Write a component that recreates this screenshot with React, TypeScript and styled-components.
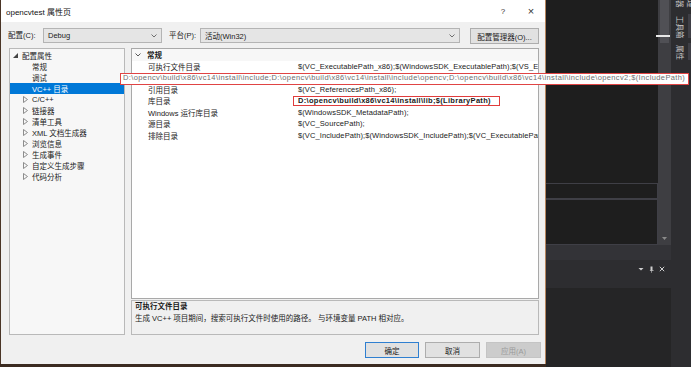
import styled, { createGlobalStyle } from "styled-components";

const FONT = `"Liberation Sans", "Noto Sans CJK SC", sans-serif`;

const GlobalStyle = createGlobalStyle`
  html, body {
    margin: 0;
    padding: 0;
    background: #1e1e1e;
  }
  body {
    font-family: ${FONT};
  }
`;

const Screen = styled.div`
	position: relative;
	width: 691px;
	height: 367px;
	display: flex;
	align-items: flex-start;
	background: #3b2b21;
	overflow: hidden;
	font-family: ${FONT};
	font-size: 7.5px;
	color: #1a1a1a;
`;

/* ---------- dialog ---------- */

const Dialog = styled.div`
	width: 546px;
	height: 364px;
	box-sizing: border-box;
	flex-shrink: 0;
	display: flex;
	flex-direction: column;
	background: #f0f0f0;
	border-left: 1px solid #4a3526;
	border-right: 1px solid #b5845d;
`;

const TitleBar = styled.div`
	height: 22px;
	display: flex;
	align-items: center;
	background: #ffffff;
	padding-left: 5px;
`;

const TitleText = styled.span`
	flex: 1;
	font-size: 8px;
	color: #111;
`;

const TitleButton = styled.span`
	width: 28px;
	text-align: center;
	font-size: ${(p) => (p.big ? "11px" : "8px")};
	color: #333;
`;

const ConfigRow = styled.div`
	height: 26px;
	box-sizing: border-box;
	display: flex;
	align-items: flex-start;
	padding: 6px 0 0 7px;
`;

const FieldLabel = styled.span`
	width: ${(p) => p.w}px;
	margin-left: ${(p) => p.ml || 0}px;
	line-height: 15px;
`;

const Combo = styled.div`
	width: ${(p) => p.w}px;
	height: 15px;
	box-sizing: border-box;
	display: flex;
	align-items: center;
	justify-content: space-between;
	padding: 0 4px 0 4px;
	background: #e5e5e5;
	border: 1px solid #b4b4b4;
`;

const PushButton = styled.div`
	width: ${(p) => p.w}px;
	height: 16px;
	box-sizing: border-box;
	margin-left: ${(p) => p.ml || 0}px;
	display: flex;
	align-items: center;
	justify-content: center;
	background: ${(p) => (p.disabled ? "#cccccc" : "#e1e1e1")};
	border: 1px solid ${(p) => (p.primary ? "#2f7fd0" : p.disabled ? "#c4c4c4" : "#adadad")};
	color: ${(p) => (p.disabled ? "#9a9a9a" : "#1a1a1a")};
`;

const Main = styled.div`
	height: 287px;
	display: flex;
	padding-left: 8px;
`;

const Tree = styled.div`
	width: 116px;
	box-sizing: border-box;
	background: #f7f7f7;
	border: 1px solid #b9b9b9;
	padding-top: 1px;
`;

const TreeRow = styled.div`
	height: 11px;
	display: flex;
	align-items: center;
	padding-left: ${(p) => (p.level ? 13 : 3)}px;
	background: ${(p) => (p.selected ? "#0078d7" : "transparent")};
	color: ${(p) => (p.selected ? "#ffffff" : "#1a1a1a")};
`;

const Expander = styled.span`
	width: 9px;
	height: 11px;
	display: flex;
	align-items: center;
`;

const RightPane = styled.div`
	width: 408px;
	margin-left: 6px;
	display: flex;
	flex-direction: column;
	gap: 1px;
`;

const Grid = styled.div`
	height: 251px;
	box-sizing: border-box;
	background: #ffffff;
	border: 1px solid #a9a9a9;
	overflow: hidden;
`;

const GridRow = styled.div`
	height: 11.5px;
	display: grid;
	grid-template-columns: 12px 149px 1fr;
	align-items: center;
	background: ${(p) => (p.header ? "#f7f7f7" : "transparent")};
	visibility: ${(p) => (p.covered ? "hidden" : "visible")};
`;

const Gutter = styled.span`
	display: flex;
	justify-content: center;
	align-items: center;
`;

const NameCell = styled.span`
	padding-left: ${(p) => (p.header ? 3 : 4)}px;
	font-weight: ${(p) => (p.header ? 700 : 400)};
	white-space: nowrap;
`;

const ValueCell = styled.span`
	padding-left: 5px;
	white-space: nowrap;
	overflow: hidden;
	letter-spacing: 0.1px;
`;

const Highlight = styled.span`
	display: inline-block;
	margin-left: -5px;
	padding: 0 8px 0 4px;
	line-height: 8.5px;
	font-weight: 700;
	letter-spacing: 0.3px;
	border: 1.5px solid #e03c3c;
`;

const Description = styled.div`
	height: 35px;
	box-sizing: border-box;
	background: #f0f0f0;
	border: 1px solid #b9b9b9;
	padding-left: 3px;
	line-height: 12px;
`;

const DescTitle = styled.div`
	font-weight: 700;
`;

const Footer = styled.div`
	display: flex;
	justify-content: flex-end;
	gap: 6px;
	padding: 7px 4px 0 0;
`;

/* ---------- callout over the grid ---------- */

const Callout = styled.div`
	position: absolute;
	left: 120px;
	top: 73px;
	width: 569px;
	height: 11.5px;
	box-sizing: border-box;
	background: #ffffff;
	border: 1.5px solid #e04444;
	padding-left: 2px;
	line-height: 8.5px;
	font-size: 7.5px;
	letter-spacing: 0.38px;
	color: #6f6f6f;
	white-space: nowrap;
	overflow: hidden;
`;

/* ---------- IDE behind the dialog ---------- */

const Ide = styled.div`
	flex: 1;
	height: 367px;
	display: flex;
	background: #2d2d30;
`;

const IdeMain = styled.div`
	width: 125px;
	display: flex;
	flex-direction: column;
`;

const TopArea = styled.div`
	height: 245px;
	display: flex;
`;

const EditorStack = styled.div`
	flex: 1;
	display: flex;
	flex-direction: column;
	background: #1e1e1e;
`;

const Editor = styled.div`
	height: 183px;
	background: #1e1e1e;
`;

const OutputBox = styled.div`
	height: ${(p) => (p.grow ? "auto" : "16px")};
	flex: ${(p) => (p.grow ? 1 : "none")};
	box-sizing: border-box;
	background: #1e1e1e;
	border: 1px solid #3f3f46;
	border-left: none;
`;

const ScrollTrack = styled.div`
	width: 13px;
	position: relative;
	display: flex;
	flex-direction: column;
	align-items: center;
	background: #3e3e42;
`;

const ScrollThumb = styled.div`
	width: 9px;
	height: 43px;
	background: #505055;
`;

const Marker = styled.div`
	position: absolute;
	left: -2px;
	top: 35px;
	width: 14px;
	height: 1.5px;
	background: #e8e8e8;
`;

const ScrollArrow = styled.div`
	margin-top: auto;
	margin-bottom: 3px;
`;

const Band = styled.div`
	height: 15px;
	background: #333337;
`;

const PanelHeader = styled.div`
	height: 28px;
	display: flex;
	align-items: flex-start;
	justify-content: flex-end;
	gap: 5px;
	padding: 6px 6px 0 0;
	box-sizing: border-box;
	background: #2d2d30;
`;

const PanelBody = styled.div`
	flex: 1;
	background: #252526;
`;

const SideTabs = styled.div`
	flex: 1;
	display: flex;
	flex-direction: column;
	align-items: flex-start;
	gap: 5px;
	padding-left: 4px;
	background: #2d2d30;
`;

const SideTab = styled.div`
	height: ${(p) => p.h}px;
	display: flex;
	justify-content: flex-end;
	align-items: flex-end;
	flex-direction: column;
	overflow: hidden;
	writing-mode: vertical-rl;
	text-orientation: sideways;
	font-size: 7.5px;
	color: #c8c8c8;
	border-right: 4px solid #3f3f46;
	padding-right: 2px;
`;

const Caret = ({ open }: { open?: boolean }) =>
	open ? (
		<svg width="5" height="5" viewBox="0 0 5 5">
			<polygon points="5,0 5,5 0,5" fill="#444" />
		</svg>
	) : (
		<svg width="5" height="7" viewBox="0 0 5 7">
			<polygon points="0.5,0.5 4.5,3.5 0.5,6.5" fill="none" stroke="#808080" strokeWidth="0.9" />
		</svg>
	);

const Chevron = ({ color = "#606060" }: { color?: string }) => (
	<svg width="6" height="4" viewBox="0 0 6 4">
		<polyline points="0.5,0.5 3,3 5.5,0.5" fill="none" stroke={color} strokeWidth="0.9" />
	</svg>
);

const treeItems = [
	{ label: "常规" },
	{ label: "调试" },
	{ label: "VC++ 目录", selected: true },
	{ label: "C/C++", closed: true },
	{ label: "链接器", closed: true },
	{ label: "清单工具", closed: true },
	{ label: "XML 文档生成器", closed: true },
	{ label: "浏览信息", closed: true },
	{ label: "生成事件", closed: true },
	{ label: "自定义生成步骤", closed: true },
	{ label: "代码分析", closed: true },
];

const includePath =
	"D:\\opencv\\build\\x86\\vc14\\install\\include;D:\\opencv\\build\\x86\\vc14\\install\\include\\opencv;D:\\opencv\\build\\x86\\vc14\\install\\include\\opencv2;$(IncludePath)";

const props = [
	{ name: "可执行文件目录", value: "$(VC_ExecutablePath_x86);$(WindowsSDK_ExecutablePath);$(VS_ExecutablePath);$(MSBuild_ExecutablePath)" },
	{ name: "包含目录", value: includePath, covered: true },
	{ name: "引用目录", value: "$(VC_ReferencesPath_x86);" },
	{ name: "库目录", value: "D:\\opencv\\build\\x86\\vc14\\install\\lib;$(LibraryPath)", marked: true },
	{ name: "Windows 运行库目录", value: "$(WindowsSDK_MetadataPath);" },
	{ name: "源目录", value: "$(VC_SourcePath);" },
	{ name: "排除目录", value: "$(VC_IncludePath);$(WindowsSDK_IncludePath);$(VC_ExecutablePath_x86)" },
];

export default function App() {
	return (
		<Screen>
			<GlobalStyle />
			<Dialog>
				<TitleBar>
					<TitleText>opencvtest 属性页</TitleText>
					<TitleButton>?</TitleButton>
					<TitleButton big>×</TitleButton>
				</TitleBar>

				<ConfigRow>
					<FieldLabel w={35}>配置(C):</FieldLabel>
					<Combo w={119}>
						<span>Debug</span>
						<Chevron />
					</Combo>
					<FieldLabel w={31} ml={7}>
						平台(P):
					</FieldLabel>
					<Combo w={260}>
						<span>活动(Win32)</span>
						<Chevron />
					</Combo>
					<PushButton w={69} ml={10}>
						配置管理器(O)...
					</PushButton>
				</ConfigRow>

				<Main>
					<Tree>
						<TreeRow>
							<Expander>
								<Caret open />
							</Expander>
							配置属性
						</TreeRow>
						{treeItems.map((item) => (
							<TreeRow key={item.label} level={1} selected={item.selected}>
								<Expander>{item.closed && <Caret />}</Expander>
								{item.label}
							</TreeRow>
						))}
					</Tree>

					<RightPane>
						<Grid>
							<GridRow header>
								<Gutter>
									<Chevron color="#444" />
								</Gutter>
								<NameCell header>常规</NameCell>
								<span />
							</GridRow>
							{props.map((p) => (
								<GridRow key={p.name} covered={p.covered}>
									<span />
									<NameCell>{p.name}</NameCell>
									<ValueCell>{p.marked ? <Highlight>{p.value}</Highlight> : p.value}</ValueCell>
								</GridRow>
							))}
						</Grid>
						<Description>
							<DescTitle>可执行文件目录</DescTitle>
							<div>生成 VC++ 项目期间，搜索可执行文件时使用的路径。 与环境变量 PATH 相对应。</div>
						</Description>
					</RightPane>
				</Main>

				<Footer>
					<PushButton w={54} primary>
						确定
					</PushButton>
					<PushButton w={55}>取消</PushButton>
					<PushButton w={55} disabled>
						应用(A)
					</PushButton>
				</Footer>
			</Dialog>

			<Ide>
				<IdeMain>
					<TopArea>
						<EditorStack>
							<Editor />
							<OutputBox />
							<OutputBox grow />
						</EditorStack>
						<ScrollTrack>
							<ScrollThumb />
							<Marker />
							<ScrollArrow>
								<svg width="5" height="3" viewBox="0 0 5 3">
									<polygon points="0,0 5,0 2.5,3" fill="#8a8a8a" />
								</svg>
							</ScrollArrow>
						</ScrollTrack>
					</TopArea>
					<Band />
					<PanelHeader>
						<svg width="6" height="6" viewBox="0 0 6 6">
							<polygon points="0.5,2 5.5,2 3,4.5" fill="#d0d0d0" />
						</svg>
						<svg width="5" height="7" viewBox="0 0 5 7">
							<path d="M1.5 0.5h2v3.5h1v0.8h-1.5v2h-0.6v-2h-1.5v-0.8h0.6z" fill="#d0d0d0" />
						</svg>
						<svg width="6" height="6" viewBox="0 0 6 6">
							<path d="M0.8 0.8L5.2 5.2M5.2 0.8L0.8 5.2" stroke="#d0d0d0" strokeWidth="1" />
						</svg>
					</PanelHeader>
					<PanelBody />
				</IdeMain>
				<SideTabs>
					<SideTab h={9}>资源管理器</SideTab>
					<SideTab h={24}>工具箱</SideTab>
					<SideTab h={17}>属性</SideTab>
				</SideTabs>
			</Ide>

			<Callout>{includePath}</Callout>
		</Screen>
	);
}
